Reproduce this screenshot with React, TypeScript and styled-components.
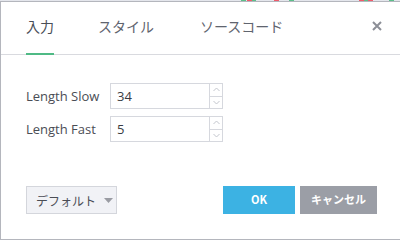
import React from "react";
import styled, { createGlobalStyle } from "styled-components";

const Global = createGlobalStyle`
  html, body { margin: 0; padding: 0; background: #ffffff; }
  body { font-family: "Open Sans", "Noto Sans CJK JP", sans-serif; }
  * { box-sizing: border-box; }
`;

const Page = styled.div`
  width: 400px;
  height: 240px;
  display: flex;
  flex-direction: column;
  overflow: hidden;
`;

const ChartStrip = styled.div`
  height: 1px;
  background: #e4e6ec;
  display: flex;
  flex: none;
`;

const Tick = styled.div<{ $c: string; $w: number }>`
  width: ${(p) => p.$w}px;
  background: ${(p) => p.$c};
`;

const Dialog = styled.div`
  flex: 1;
  border-top: 1px solid #b4b6bd;
  border-left: 1px solid #b4b6bd;
  border-bottom: 1px solid #b4b6bd;
  background: #fff;
  display: flex;
  flex-direction: column;
`;

const Header = styled.div`
  height: 53px;
  border-bottom: 1px solid #d9dadf;
  display: flex;
  align-items: stretch;
  padding-left: 25px;
  padding-right: 18px;
`;

const Tab = styled.div<{ $active?: boolean; $mr: number }>`
  font-family: "Noto Sans CJK JP", sans-serif;
  font-size: 14px;
  color: ${(p) => (p.$active ? "#4a4e57" : "#60646e")};
  display: flex;
  align-items: center;
  padding-bottom: 4px;
  margin-right: ${(p) => p.$mr}px;
  position: relative;
  &::after {
    content: "";
    display: ${(p) => (p.$active ? "block" : "none")};
    position: absolute;
    left: 0;
    right: 0;
    bottom: -1px;
    height: 2px;
    background: #4fba85;
  }
`;

const Spacer = styled.div`
  flex: 1;
`;

const Close = styled.div`
  display: flex;
  align-items: center;
  padding-bottom: 4px;
`;

const Body = styled.div`
  padding: 28px 0 0 25px;
  display: flex;
  flex-direction: column;
  gap: 7px;
`;

const Row = styled.div`
  display: flex;
  align-items: center;
`;

const Label = styled.div`
  width: 84px;
  font-size: 13px;
  color: #4a4d55;
`;

const Field = styled.div`
  width: 113px;
  height: 26px;
  border: 1px solid #d6d8de;
  display: flex;
`;

const Value = styled.div`
  flex: 1;
  font-size: 13px;
  color: #3a3d44;
  padding-left: 6px;
  display: flex;
  align-items: center;
`;

const Spin = styled.div`
  width: 13px;
  border-left: 1px solid #d6d8de;
  display: flex;
  flex-direction: column;
`;

const SpinBtn = styled.div<{ $top?: boolean }>`
  flex: 1;
  display: flex;
  align-items: center;
  justify-content: center;
  border-bottom: ${(p) => (p.$top ? "1px solid #d6d8de" : "none")};
`;

const Footer = styled.div`
  margin-top: auto;
  padding: 0 23px 25px 25px;
  display: flex;
  align-items: center;
`;

const Defaults = styled.div`
  width: 91px;
  height: 28px;
  border: 1px solid #d4d6dc;
  background: #f1f2f6;
  display: flex;
  align-items: center;
  padding-left: 9px;
  gap: 8px;
  white-space: nowrap;
  font-family: "Noto Sans CJK JP", sans-serif;
  font-size: 12px;
  color: #4a4d55;
`;

const Btn = styled.div<{ $bg: string; $w: number }>`
  width: ${(p) => p.$w}px;
  height: 28px;
  background: ${(p) => p.$bg};
  color: #fff;
  font-family: "Noto Sans CJK JP", sans-serif;
  font-weight: 700;
  font-size: 11px;
  display: flex;
  align-items: center;
  justify-content: center;
  padding-bottom: 3px;
`;

const BtnGroup = styled.div`
  margin-left: auto;
  display: flex;
  gap: 5px;
`;

const Up = () => (
  <svg width="7" height="5" viewBox="0 0 7 5">
    <path d="M0.5 4 L3.5 1 L6.5 4" stroke="#c3c6cd" strokeWidth="1" fill="none" />
  </svg>
);
const Down = () => (
  <svg width="7" height="5" viewBox="0 0 7 5">
    <path d="M0.5 1 L3.5 4 L6.5 1" stroke="#c3c6cd" strokeWidth="1" fill="none" />
  </svg>
);

const ticks: [string, number][] = [
  ["#e4e6ec", 241], ["#5cbf8a", 5], ["#e4e6ec", 1], ["#ef5b6b", 5], ["#5cbf8a", 4],
  ["#e4e6ec", 18], ["#ef5b6b", 5], ["#e4e6ec", 10], ["#5cbf8a", 5], ["#e4e6ec", 65],
  ["#ef5b6b", 5], ["#5cbf8a", 4], ["#ef5b6b", 5], ["#e4e6ec", 16], ["#5cbf8a", 5],
];

const Field2 = ({ value }: { value: string }) => (
  <Field>
    <Value>{value}</Value>
    <Spin>
      <SpinBtn $top><Up /></SpinBtn>
      <SpinBtn><Down /></SpinBtn>
    </Spin>
  </Field>
);

export default function App() {
  return (
    <>
      <Global />
      <Page>
        <ChartStrip>
          {ticks.map(([c, w], i) => (
            <Tick key={i} $c={c} $w={w} />
          ))}
        </ChartStrip>
        <Dialog>
          <Header>
            <Tab $active $mr={44}>入力</Tab>
            <Tab $mr={46}>スタイル</Tab>
            <Tab $mr={0}>ソースコード</Tab>
            <Spacer />
            <Close>
              <svg width="10" height="10" viewBox="0 0 10 10">
                <path d="M1 1 L9 9 M9 1 L1 9" stroke="#8c8f97" strokeWidth="2" />
              </svg>
            </Close>
          </Header>
          <Body>
            <Row>
              <Label>Length Slow</Label>
              <Field2 value="34" />
            </Row>
            <Row>
              <Label>Length Fast</Label>
              <Field2 value="5" />
            </Row>
          </Body>
          <Footer>
            <Defaults>
              デフォルト
              <svg width="9" height="5" viewBox="0 0 9 5">
                <path d="M0 0 L9 0 L4.5 5 Z" fill="#9a9ca3" />
              </svg>
            </Defaults>
            <BtnGroup>
              <Btn $bg="#3cb2e3" $w={72}>OK</Btn>
              <Btn $bg="#9b9ea6" $w={77}>キャンセル</Btn>
            </BtnGroup>
          </Footer>
        </Dialog>
      </Page>
    </>
  );
}
